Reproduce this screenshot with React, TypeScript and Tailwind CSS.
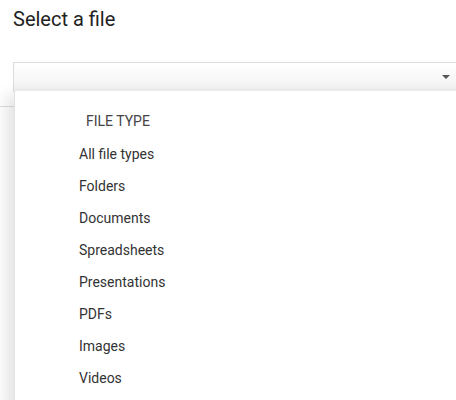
import { Fragment } from "react"

const types = ["All file types", "Folders", "Documents", "Spreadsheets", "Presentations", "PDFs", "Images", "Videos"]

const App = () => {
  return (
    <div className="relative w-[456px] h-[400px] overflow-hidden bg-white font-['Roboto','Liberation_Sans',sans-serif]">
      <h1 className="pl-[13px] pt-[5px] text-[20px] leading-[28px] text-[#222]">Select a file</h1>
      <div className="ml-[13px] mt-[29px] w-[460px] h-[30px] border border-[#dcdcdc] bg-gradient-to-b from-white to-[#f1f1f1] flex items-center justify-end pr-[22px]">
        <span className="w-0 h-0 border-l-[4px] border-r-[4px] border-t-[4px] border-l-transparent border-r-transparent border-t-[#555]"></span>
      </div>
      <div className="mt-[14px] border-b border-[#dedede]"></div>

      {/* dropdown */}
      <div className="absolute left-[14px] top-[91px] w-[460px] h-[320px] bg-white border-l border-[#e2e2e2] shadow-[-8px_4px_14px_rgba(0,0,0,0.11)]">
        <div className="pl-[71px] pt-[21px] text-[14px] leading-[19px] text-[#444] uppercase">File type</div>
        <div className="pl-[64px] pt-[7px] flex flex-col">
          {types.map((t) => (
            <Fragment key={t}>
              <div className="h-[32px] flex items-center text-[14px] text-[#333]">{t}</div>
            </Fragment>
          ))}
        </div>
      </div>
    </div>
  )
}

export default App
